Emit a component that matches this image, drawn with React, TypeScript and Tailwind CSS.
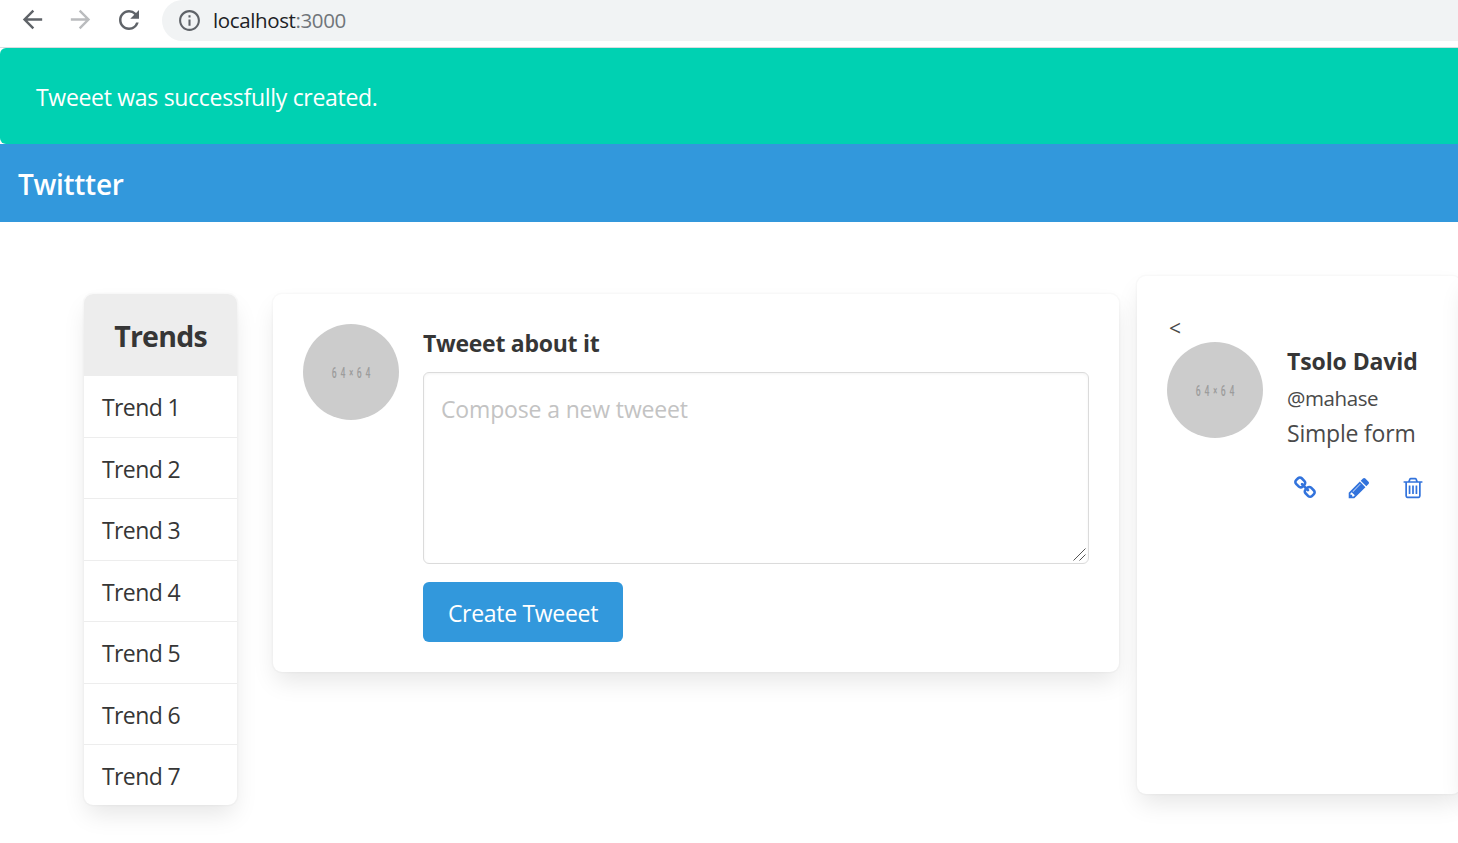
import type { ReactNode } from 'react';
import { MdArrowBack, MdArrowForward, MdInfoOutline, MdRefresh } from 'react-icons/md';

const cardShadow = 'shadow-[0_12px_24px_-3px_rgba(10,10,10,0.1),0_0_0_1.5px_rgba(10,10,10,0.02)]';

const trends = ['Trend 1', 'Trend 2', 'Trend 3', 'Trend 4', 'Trend 5', 'Trend 6', 'Trend 7'];

const linkPath =
  'M1520 1216q0-40-28-68l-208-208q-28-28-68-28-42 0-72 32 3 3 19 18.5t21.5 21.5 15 19 13 25.5 3.5 27.5q0 40-28 68t-68 28q-15 0-27.5-3.5t-25.5-13-19-15-21.5-21.5-18.5-19q-33 31-33 73 0 40 28 68l206 207q27 27 68 27 40 0 68-26l147-146q28-28 28-67zm-703-705q0-40-28-68l-206-207q-28-28-68-28-39 0-68 27l-147 146q-28 28-28 67 0 40 28 68l208 208q27 27 68 27 42 0 72-31-3-3-19-18.5t-21.5-21.5-15-19-13-25.5-3.5-27.5q0-40 28-68t68-28q15 0 27.5 3.5t25.5 13 19 15 21.5 21.5 18.5 19q33-31 33-73zm895 705q0 120-85 203l-147 146q-83 83-203 83-121 0-204-85l-206-207q-83-83-83-203 0-123 88-209l-88-88q-86 88-208 88-120 0-204-84l-208-208q-84-84-84-204t85-203l147-146q83-83 203-83 121 0 204 85l206 207q83 83 83 203 0 123-88 209l88 88q86-88 208-88 120 0 204 84l208 208q84 84 84 204z';
const pencilPath =
  'M491 1536l91-91-235-235-91 91v107h128v128h107zm523-928q0-22-22-22-10 0-17 7l-542 542q-7 7-7 17 0 22 22 22 10 0 17-7l542-542q7-7 7-17zm-54-192l416 416-832 832h-416v-416zm683 96q0 53-37 90l-166 166-416-416 166-165q36-38 90-38 53 0 91 38l235 234q37 39 37 91z';
const trashPath =
  'M704 736v576q0 14-9 23t-23 9h-64q-14 0-23-9t-9-23v-576q0-14 9-23t23-9h64q14 0 23 9t9 23zm256 0v576q0 14-9 23t-23 9h-64q-14 0-23-9t-9-23v-576q0-14 9-23t23-9h64q14 0 23 9t9 23zm256 0v576q0 14-9 23t-23 9h-64q-14 0-23-9t-9-23v-576q0-14 9-23t23-9h64q14 0 23 9t9 23zm128 724v-948h-896v948q0 22 7 40.5t14.5 27 10.5 8.5h832q3 0 10.5-8.5t14.5-27 7-40.5zm-672-1076h448l-48-117q-7-9-17-11h-317q-10 2-17 11zm928 32v64q0 14-9 23t-23 9h-96v948q0 83-47 143.5t-113 60.5h-832q-66 0-113-58.5t-47-141.5v-952h-96q-14 0-23-9t-9-23v-64q0-14 9-23t23-9h309l70-167q15-37 54-63t79-26h320q40 0 79 26t54 63l70 167h309q14 0 23 9t9 23z';

function ActionIcon({ d, label }: { d: string; label: string }) {
  return (
    <a href="#" aria-label={label} className="flex size-9 items-center justify-center text-[#3273dc]">
      <svg viewBox="0 0 1792 1792" className="size-6 fill-current">
        <path d={d} />
      </svg>
    </a>
  );
}

function Avatar() {
  return (
    <div className="flex size-24 shrink-0 items-center justify-center rounded-full bg-[#ccc]">
      <span className="flex origin-center scale-x-[0.62] items-center pt-px font-['Roboto',sans-serif] text-[14px] leading-none font-medium tracking-[6px] whitespace-nowrap text-[#9c9c9c]">
        64
        <span className="mr-[6px] text-[12px] font-bold tracking-normal">×</span>
        6<span className="tracking-normal">4</span>
      </span>
    </div>
  );
}

function Card({ className, children }: { className: string; children?: ReactNode }) {
  return <section className={`shrink-0 rounded-[9px] bg-white ${cardShadow} ${className}`}>{children}</section>;
}

export default function App() {
  return (
    <div className="flex h-[843px] w-full flex-col overflow-hidden bg-white font-['Open_Sans',sans-serif] text-[23px] text-[#4a4a4a]">
      <header className="flex h-12 shrink-0 items-start border-b border-[#dadce0] bg-white">
        <div className="flex h-[39px] items-center gap-[19px] pl-[18px] text-[#5f6368]">
          <MdArrowBack size={29} />
          <MdArrowForward size={29} className="text-[#babcbe]" />
          <MdRefresh size={30} />
        </div>
        <div className="ml-[18px] flex h-[41px] flex-1 items-center rounded-bl-[21px] rounded-tl-[21px] bg-[#f1f3f4] pl-[15px]">
          <MdInfoOutline size={25} className="text-[#5f6368]" />
          <span className="ml-[11px] text-[20.5px] leading-none tracking-[-0.38px] text-[#202124]">
            localhost<span className="text-[#70757a]">:3000</span>
          </span>
        </div>
      </header>

      <div className="flex h-24 shrink-0 items-center rounded-l-[6px] bg-[#00d1b2] pt-[2px] pl-9 text-white">
        <p className="tracking-[-0.3px]">Tweeet was successfully created.</p>
      </div>

      <nav className="flex h-[78px] shrink-0 items-center bg-[#3298dc] pt-[2px] pl-[18px]">
        <span className="text-[28px] font-semibold tracking-[-0.3px] text-white">Twittter</span>
      </nav>

      <main className="flex min-h-0 flex-1 items-start pt-[54px] pl-[84px]">
        <Card className="mt-[18px] w-[153px] overflow-hidden">
          <h1 className="flex h-[82px] items-center justify-center bg-[#ededed] pt-[2px] text-[28.5px] font-bold tracking-[-0.75px] text-[#363636]">
            Trends
          </h1>
          <ul className="tracking-[-0.6px] text-[#363636]">
            {trends.map((trend) => (
              <li key={trend} className="flex h-[61.5px] items-center border-b border-[#ededed] pt-[2.5px] pl-[18px] last:h-[60px] last:border-b-0">
                {trend}
              </li>
            ))}
          </ul>
        </Card>

        <Card className="mt-[18px] ml-9 flex h-[378px] w-[846px] gap-6 p-[30px]">
          <Avatar />
          <form className="flex w-[666px] flex-col items-start">
            <label className="h-12 pt-[3px] leading-8 font-bold tracking-[-0.27px] text-[#363636]">Tweeet about it</label>
            <div className="relative h-48 w-full">
              <textarea
                placeholder="Compose a new tweeet"
                className="block h-full w-full resize-none rounded-[6px] border border-[#dbdbdb] bg-white px-[17px] pt-[18px] leading-9 tracking-[-0.15px] placeholder-[#c3c3c3] shadow-[inset_0_1px_3px_rgba(10,10,10,0.05)] outline-none"
              />
              <svg viewBox="0 0 13 13" className="absolute right-[3px] bottom-[3px] size-[13px] stroke-[#555]">
                <path d="M.5 12.5l12-12M6.5 12.5l6-6" />
              </svg>
            </div>
            <button type="button" className="mt-[18px] h-[60px] w-[200px] rounded-[6px] bg-[#3298dc] pt-[2px] tracking-[-0.3px] text-white">
              Create Tweeet
            </button>
          </form>
        </Card>

        <Card className="ml-[18px] h-[518px] w-[324px] p-[30px]">
          <div className="h-9 pt-1 pl-[2px] text-[21px] leading-9">&lt;</div>
          <div className="flex gap-6">
            <Avatar />
            <div className="whitespace-nowrap">
              <p className="h-[38px] leading-[38px] font-bold tracking-[-0.1px] text-[#363636]">Tsolo David</p>
              <p className="h-[35px] text-[20.5px] leading-[36px] tracking-[-0.4px]">@mahase</p>
              <p className="h-9 leading-[36px] tracking-[-0.2px]">Simple form</p>
              <div className="mt-[18.5px] flex gap-[18px]">
                <ActionIcon d={linkPath} label="Open" />
                <ActionIcon d={pencilPath} label="Edit" />
                <ActionIcon d={trashPath} label="Delete" />
              </div>
            </div>
          </div>
        </Card>
        <Card className="h-[518px] w-[324px]" />
      </main>
    </div>
  );
}
